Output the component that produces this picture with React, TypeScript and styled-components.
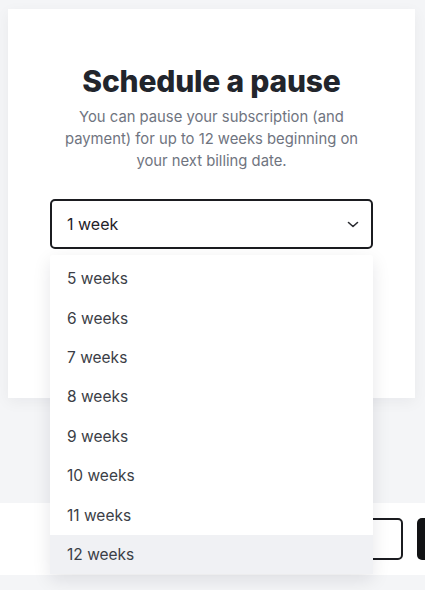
import React from "react";
import styled, { createGlobalStyle } from "styled-components";

const Global = createGlobalStyle`
  html, body { margin: 0; padding: 0; }
  body {
    background: #f4f5f7;
    font-family: Inter, "Noto Sans", sans-serif;
    -webkit-font-smoothing: antialiased;
  }
`;

const Page = styled.div`
  position: relative;
  height: 590px;
  overflow: hidden;
`;

const Card = styled.section`
  margin: 9px 10px 0 8px;
  height: 389px;
  background: #ffffff;
  box-shadow: 0 4px 14px rgba(20, 24, 40, 0.05);
  padding: 0 42px;
  box-sizing: border-box;
  display: flex;
  flex-direction: column;
  align-items: stretch;
  position: relative;
  z-index: 2;
`;

const Title = styled.h1`
  margin: 54px 0 0;
  font-size: 30px;
  line-height: 36px;
  font-weight: 800;
  color: #22252c;
  text-align: center;
  letter-spacing: -0.2px;
`;

const Subtitle = styled.p`
  margin: 7px 0 0;
  font-size: 14.8px;
  line-height: 22px;
  color: #6f7480;
  text-align: center;
`;

const SelectWrap = styled.div`
  position: relative;
  margin-top: 27px;
`;

const SelectBox = styled.div`
  height: 50px;
  box-sizing: border-box;
  border: 2px solid #1b1c20;
  border-radius: 5px;
  display: flex;
  align-items: center;
  justify-content: space-between;
  padding: 0 10px 0 15px;
  font-size: 16px;
  color: #1f2229;
  background: #fff;
`;

const Menu = styled.ul`
  position: absolute;
  top: calc(100% + 6px);
  left: 0;
  right: 0;
  margin: 0;
  padding: 4px 0 0;
  list-style: none;
  background: #fff;
  box-shadow: 0 6px 18px rgba(20, 24, 40, 0.1);
  border-radius: 3px;
  z-index: 5;
`;

const Item = styled.li<{ $active?: boolean }>`
  height: 39.4px;
  display: flex;
  align-items: center;
  padding-left: 17px;
  font-size: 15.5px;
  color: #3b3e46;
  background: ${(p) => (p.$active ? "#f0f1f4" : "transparent")};
`;

const Footer = styled.footer`
  margin-top: 105px;
  height: 72px;
  background: #fff;
  overflow: hidden;
  display: flex;
  align-items: center;
  padding-left: 243px;
  gap: 14px;
`;

const OutlineButton = styled.div`
  flex: 0 0 160px;
  height: 42px;
  box-sizing: border-box;
  border: 2px solid #1b1c20;
  border-radius: 5px;
  background: #fff;
`;

const SolidButton = styled.div`
  flex: 0 0 160px;
  height: 42px;
  border-radius: 5px;
  background: #111214;
`;

const Chevron = () => (
  <svg width="16" height="16" viewBox="0 0 16 16" fill="none">
    <path d="M3.5 6.5 L8 10.5 L12.5 6.5" stroke="#2a2c31" strokeWidth="1.6" strokeLinecap="round" strokeLinejoin="round" />
  </svg>
);

const options = [5, 6, 7, 8, 9, 10, 11, 12];

export default function App() {
  return (
    <Page>
      <Global />
      <Card>
        <Title>Schedule a pause</Title>
        <Subtitle>
          You can pause your subscription (and
          <br />
          payment) for up to 12 weeks beginning on
          <br />
          your next billing date.
        </Subtitle>
        <SelectWrap>
          <SelectBox>
            <span>1 week</span>
            <Chevron />
          </SelectBox>
          <Menu>
            {options.map((n) => (
              <Item key={n} $active={n === 12}>
                {n} weeks
              </Item>
            ))}
          </Menu>
        </SelectWrap>
      </Card>
      <Footer>
        <OutlineButton />
        <SolidButton />
      </Footer>
    </Page>
  );
}
